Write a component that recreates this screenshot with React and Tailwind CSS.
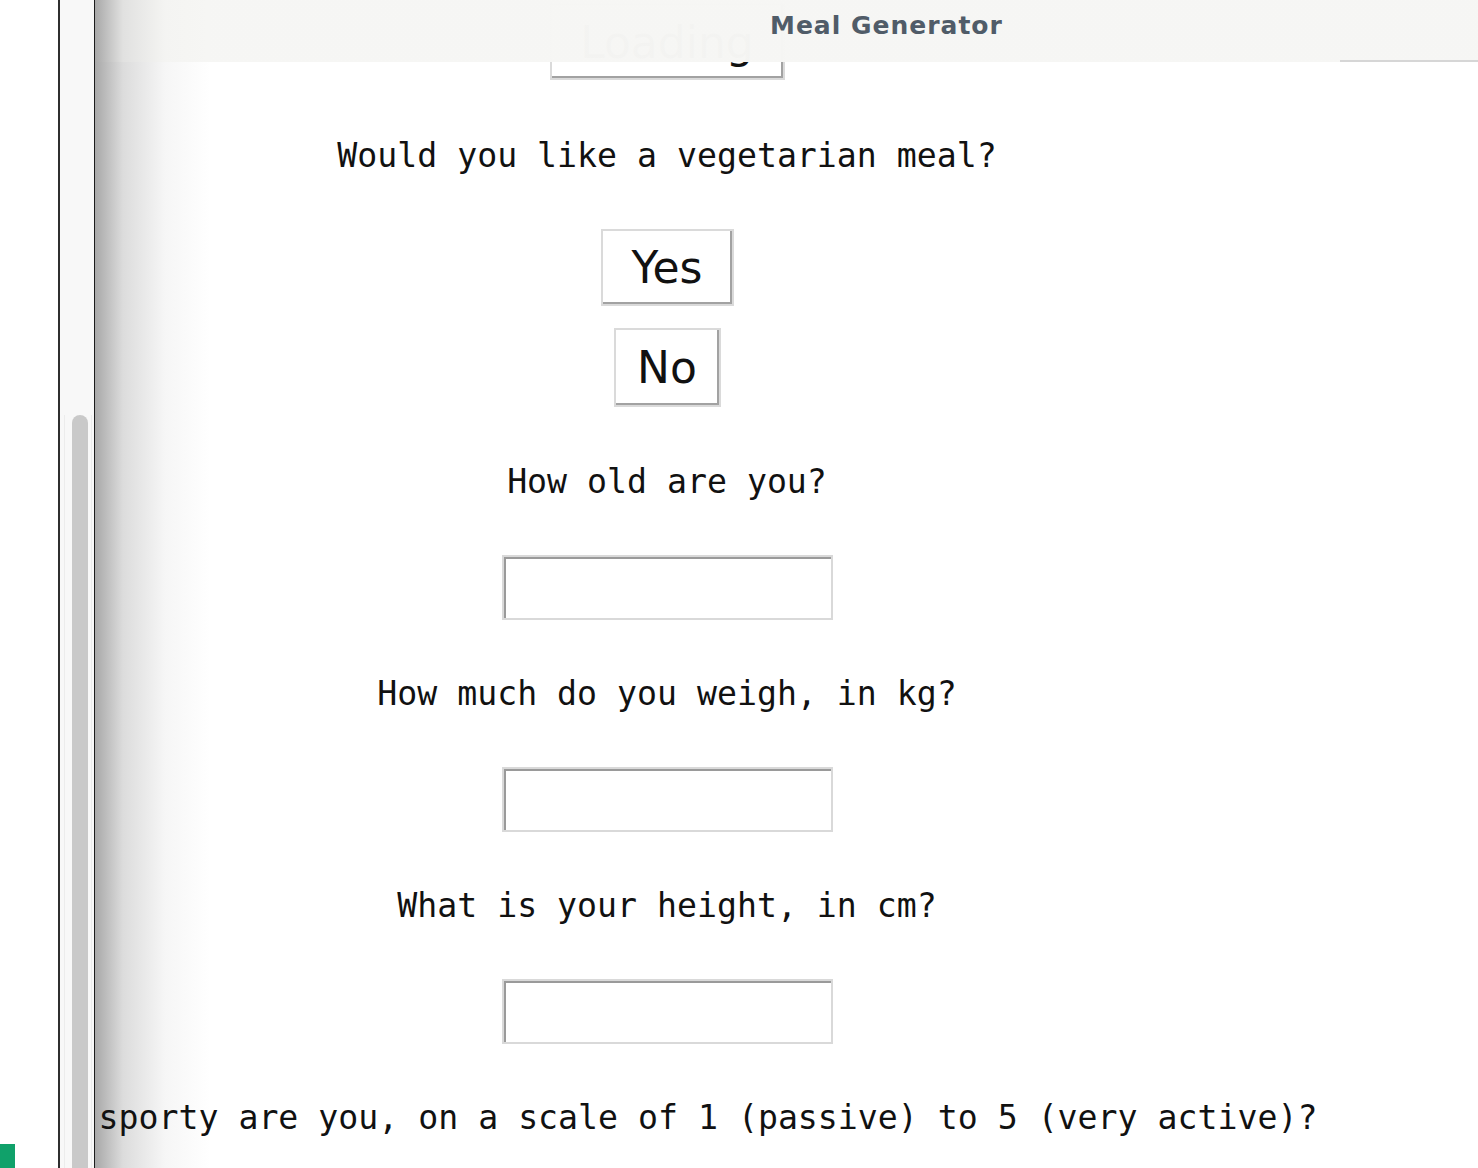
import React from 'react';

const mono = { fontFamily: '"DejaVu Sans Mono", monospace' };

const Question = ({ children, className = '' }) => (
  <p className={`text-[33.2px] leading-[38px] text-[#111] whitespace-nowrap font-['DejaVu_Sans_Mono',monospace] ${className}`}>
    {children}
  </p>
);

const ChoiceButton = ({ children, className = '' }) => (
  <button
    className={`flex items-center justify-center bg-white border-2 border-[#dadada] shadow-[inset_-2px_-2px_0_#a2a2a2] text-[44px] leading-none text-[#111] font-['DejaVu_Sans',sans-serif] ${className}`}
  >
    {children}
  </button>
);

const NumberField = ({ className = '' }) => (
  <input
    type="text"
    className={`w-[331px] h-[65px] bg-white border-2 border-[#d9d9d9] shadow-[inset_2px_2px_0_#9a9a9a] outline-none ${className}`}
  />
);

const App = () => {
  return (
    <div className="w-[1478px] h-[1168px] flex bg-white overflow-hidden">
      {/* left strip */}
      <div className="w-[58px] flex flex-col justify-end">
        <div className="w-[15px] h-[24px] bg-[#10a16a]"></div>
      </div>
      <div className="w-[2px] bg-[#2f2f2f]"></div>

      {/* scrollbar */}
      <div className="w-[34px] bg-[#f8f8f8] flex pt-[415px]">
        <div className="w-[4px]"></div>
        <div className="w-px bg-[#ececec]"></div>
        <div className="w-[7px]"></div>
        <div className="w-[16px] bg-[#c9c9c9] rounded-t-[8px]"></div>
        <div className="w-[3px]"></div>
        <div className="w-px bg-[#ececec]"></div>
      </div>
      <div className="w-px bg-[#1b1b1b]"></div>

      {/* app window */}
      <div className="relative flex-1 overflow-hidden bg-[linear-gradient(to_right,#a8a8a8,#dcdcdc_28px,#f6f6f6_70px,#ffffff_115px)]">
        {/* header overlay */}
        <div className="absolute top-0 left-0 right-0 h-[62px] z-10 bg-[linear-gradient(to_right,rgba(168,168,168,0.95),rgba(225,225,224,0.99)_28px,rgba(244,244,242,0.99)_70px,rgba(246,246,244,0.99)_115px)] flex items-start pl-[675px] pt-[12px]">
          <h1 className="text-[25px] font-bold tracking-[1px] text-[#505c68] font-['DejaVu_Sans',sans-serif] leading-[28px]">
            Meal Generator
          </h1>
          <div className="absolute right-0 bottom-0 w-[138px] h-[2px] bg-[#d6d6d6]"></div>
        </div>

        {/* form */}
        <div className="w-[1144px] flex flex-col items-center pt-[3px]" style={mono}>
          <ChoiceButton className="w-[235px] h-[77px] pt-[2px]">Loading</ChoiceButton>

          <Question className="mt-[57px]">Would you like a vegetarian meal?</Question>

          <ChoiceButton className="mt-[54px] w-[133px] h-[77px]">Yes</ChoiceButton>
          <ChoiceButton className="mt-[22px] w-[107px] h-[79px]">No</ChoiceButton>

          <Question className="mt-[56px]">How old are you?</Question>
          <NumberField className="mt-[54px]" />

          <Question className="mt-[55px]">How much do you weigh, in kg?</Question>
          <NumberField className="mt-[54px]" />

          <Question className="mt-[55px]">What is your height, in cm?</Question>
          <NumberField className="mt-[54px]" />

          <Question className="mt-[55px] ml-[2px]">
            How sporty are you, on a scale of 1 (passive) to 5 (very active)?
          </Question>
        </div>
      </div>
    </div>
  );
};

export default App;
